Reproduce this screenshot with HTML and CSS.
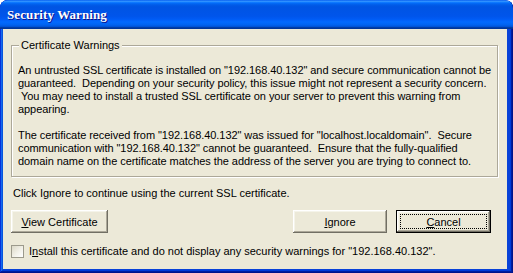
FILE: index.html
```html
<!DOCTYPE html>
<html lang="en">
<head>
    <meta charset="UTF-8">
    <title>Security Warning</title>
    <link rel="stylesheet" href="styles.css">
</head>
<body>
    <div class="window">
        <div class="title-bar">
            <span class="title">Security Warning</span>
        </div>

        <div class="window-body">
            <fieldset class="group">
                <legend>Certificate Warnings</legend>
                <p>An untrusted SSL certificate is installed on "192.168.40.132" and secure communication cannot be<br>guaranteed.&nbsp; Depending on your security policy, this issue might not represent a security concern.<br>&nbsp;You may need to install a trusted SSL certificate on your server to prevent this warning from<br>appearing.</p>
                <p>The certificate received from "192.168.40.132" was issued for "localhost.localdomain".&nbsp; Secure<br>communication with "192.168.40.132" cannot be guaranteed.&nbsp; Ensure that the fully-qualified<br>domain name on the certificate matches the address of the server you are trying to connect to.</p>
            </fieldset>

            <p class="hint">Click Ignore to continue using the current SSL certificate.</p>

            <div class="actions">
                <button class="btn btn-view"><u>V</u>iew Certificate</button>
                <button class="btn btn-ignore"><u>I</u>gnore</button>
                <button class="btn btn-default"><span class="focus"><u>C</u>ancel</span></button>
            </div>

            <label class="check">
                <span class="box"></span>
                <span>I<u>n</u>stall this certificate and do not display any security warnings for "192.168.40.132".</span>
            </label>
        </div>
    </div>
</body>
</html>
```

FILE: styles.css
```css
html, body {
    margin: 0;
    padding: 0;
}

body {
    width: 513px;
    height: 273px;
    overflow: hidden;
    background: #fff;
    font-family: Tahoma, "Liberation Sans", sans-serif;
    font-size: 11px;
    color: #000;
}

/* 視窗外框 */
.window {
    height: 273px;
    display: flex;
    flex-direction: column;
    background: #0842d8;
    border-radius: 8px 8px 0 0;
    box-shadow: inset -1px -1px #00138c, inset 1px 0 #0831d9,
                inset -2px -2px #001ea0, inset 2px 0 #166aee,
                inset -3px -3px #003bda, inset 3px 0 #0855dd;
    box-sizing: border-box;
    padding-bottom: 4px;
    overflow: hidden;
}

.title-bar {
    height: 29px;
    flex: none;
    display: flex;
    align-items: center;
    padding: 1px 0 0 7px;
    box-sizing: border-box;
    border-radius: 8px 8px 0 0;
    background: linear-gradient(to bottom, #0058ee 0%, #3593ff 4%, #288eff 6%, #127dff 8%,
                #036ffc 10%, #0262ee 14%, #0057e5 20%, #0054e3 24%, #0055eb 56%,
                #005bf5 66%, #026afe 76%, #0062ef 86%, #0052d6 92%, #0040ab 94%, #003092 100%);
}

.title {
    font-family: "Liberation Serif", serif;
    font-weight: bold;
    font-size: 13px;
    color: #fff;
    text-shadow: 1px 1px #0f1089;
    letter-spacing: 0.1px;
}

.window-body {
    flex: 1;
    min-height: 0;
    margin: 0 6px 0 3px;
    background: #ece9d8;
    display: flex;
    flex-direction: column;
}

p {
    margin: 0;
    line-height: 13px;
}

/* 群組框 */
.group {
    margin: 10px 9px 0 8px;
    padding: 12px 6px 8px 6px;
    min-width: 0;
    border: 1px solid #aca899;
    box-shadow: inset 1px 1px #fff, 1px 1px #fff;
}

.group legend {
    margin-left: 1px;
    padding: 0 2px;
    line-height: 13px;
    background: #ece9d8;
}

.group p {
    white-space: nowrap;
    letter-spacing: -0.06px;
}

.group p + p {
    margin-top: 13px;
}

.hint {
    margin: 10px 0 0 10px;
}

/* 按鈕 */
.actions {
    display: flex;
    gap: 9px;
    margin: 10px 16px 0 8px;
}

.btn {
    width: 94px;
    height: 23px;
    padding: 0;
    border: none;
    background: #ece9d8;
    font: inherit;
    color: #000;
    box-shadow: inset -1px -1px #716f64, inset 1px 1px #fff,
                inset -2px -2px #aca899, inset 2px 2px #f5f4ea;
}

.btn-view {
    width: 97px;
}

.btn-ignore {
    margin-left: auto;
}

.btn-default {
    width: 95px;
    border: 1px solid #000;
    box-sizing: border-box;
    padding: 3px;
}

.btn-default .focus {
    display: flex;
    height: 100%;
    align-items: center;
    justify-content: center;
    box-sizing: border-box;
    border: 1px dotted #000;
}

/* 勾選框 */
.check {
    display: flex;
    align-items: center;
    gap: 5px;
    margin: 12px 0 0 8px;
    line-height: 13px;
}

.box {
    width: 13px;
    height: 13px;
    flex: none;
    box-sizing: border-box;
    border: 1px solid #9c9a8c;
    background: linear-gradient(135deg, #dcd9c8 0%, #f4f3ec 60%, #fff 100%);
}
```
